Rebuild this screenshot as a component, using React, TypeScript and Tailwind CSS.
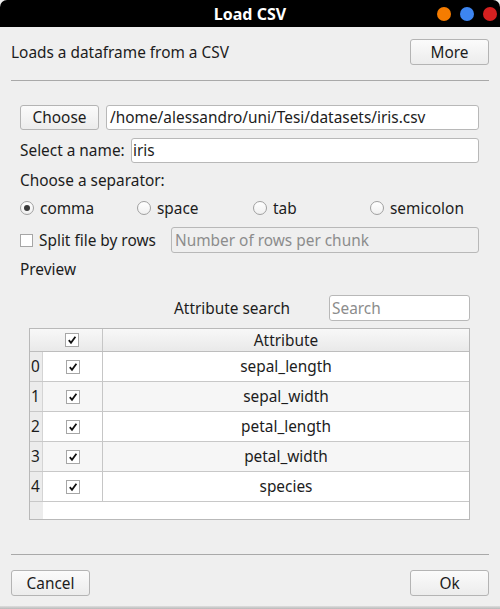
import React from "react";

const font = { fontFamily: '"Noto Sans", "DejaVu Sans", sans-serif' };

function Button({ label }: { label: string }) {
  return (
    <button className="w-[79px] h-[26px] shrink-0 rounded-[3px] border border-[#b4b4b4] bg-gradient-to-b from-[#fbfbfb] to-[#ececec] text-[15.4px] text-[#1c1c1c] leading-none pt-px">
      {label}
    </button>
  );
}

function Check() {
  return (
    <span className="w-[14px] h-[14px] bg-white border border-[#a6a6a6] flex items-center justify-center">
      <svg width="10" height="10" viewBox="0 0 10 10">
        <path d="M1.8 5.2 L4 7.8 L8.4 1.8" fill="none" stroke="#111" strokeWidth="1.8" />
      </svg>
    </span>
  );
}

function Radio({ label, checked }: { label: string; checked?: boolean }) {
  return (
    <div className="flex items-center gap-[6px]">
      <span className="w-[14px] h-[14px] rounded-full border border-[#a0a0a0] bg-gradient-to-b from-white to-[#f0f0f0] flex items-center justify-center">
        {checked && <span className="w-[6px] h-[6px] rounded-full bg-[#3a3a3a]" />}
      </span>
      <span className="pt-px">{label}</span>
    </div>
  );
}

const rows = ["sepal_length", "sepal_width", "petal_length", "petal_width", "species"];

export default function App() {
  return (
    <div className="w-[500px] h-[609px] bg-[#efefef] flex flex-col text-[15.4px] text-[#1c1c1c] overflow-hidden" style={font}>
      {/* title bar */}
      <div className="relative h-[27px] bg-black rounded-t-[7px] flex items-center justify-center shrink-0">
        <span className="text-white font-bold text-[16px]">Load CSV</span>
        <div className="absolute right-[3px] top-[7px] flex gap-[9px]">
          <span className="w-[14px] h-[14px] rounded-full bg-[#f57c00]" />
          <span className="w-[14px] h-[14px] rounded-full bg-[#3d85f0]" />
          <span className="w-[14px] h-[14px] rounded-full bg-[#d42020]" />
        </div>
      </div>

      <div className="px-[11px] flex flex-col flex-1">
        <div className="mt-[12px] h-[26px] flex items-center justify-between">
          <span className="pt-px">Loads a dataframe from a CSV</span>
          <Button label="More" />
        </div>
        <div className="mt-[15px] h-px bg-[#a9a9a9]" />

        <div className="pl-[9px] pr-[10px] mt-[24px] flex flex-col">
          <div className="h-[25px] flex gap-[7px]">
            <button className="w-[79px] h-[25px] shrink-0 rounded-[3px] border border-[#b4b4b4] bg-gradient-to-b from-[#fbfbfb] to-[#ececec] leading-none pt-px">
              Choose
            </button>
            <div className="flex-1 bg-white border border-[#b8b8b8] rounded-[3px] px-[3px] pt-px flex items-center">
              /home/alessandro/uni/Tesi/datasets/iris.csv
            </div>
          </div>

          <div className="mt-[8px] h-[25px] flex items-center">
            <span className="w-[111px] shrink-0 pt-px">Select a name:</span>
            <div className="flex-1 h-full bg-white border border-[#b8b8b8] rounded-[3px] px-[1px] pt-px flex items-center">
              iris
            </div>
          </div>

          <div className="mt-[4px] h-[26px] pt-px flex items-center">Choose a separator:</div>

          <div className="h-[30px] grid grid-cols-[117px_116px_117px_1fr] items-center">
            <Radio label="comma" checked />
            <Radio label="space" />
            <Radio label="tab" />
            <Radio label="semicolon" />
          </div>

          <div className="mt-[4px] h-[26px] flex items-center">
            <span className="w-[13px] h-[13px] bg-white border border-[#a6a6a6] shrink-0" />
            <span className="ml-[6px] w-[132px] shrink-0 pt-px">Split file by rows</span>
            <div className="flex-1 h-full border border-[#b8b8b8] rounded-[3px] px-[3px] pt-px flex items-center text-[#8c8c8c]">
              Number of rows per chunk
            </div>
          </div>

          <div className="h-[33px] pt-px flex items-center">Preview</div>

          <div className="mt-[9px] h-[26px] flex items-center pl-[154px] pr-[9px]">
            <span className="pt-px">Attribute search</span>
            <div className="ml-auto w-[141px] h-full bg-white border border-[#b8b8b8] rounded-[3px] px-[2px] pt-px flex items-center text-[#8c8c8c]">
              Search
            </div>
          </div>

          {/* table */}
          <div className="mt-[7px] mx-[9px] h-[192px] border border-[#b9b9b9] bg-white flex flex-col">
            <div className="h-[23px] flex bg-gradient-to-b from-[#f8f8f8] to-[#e9e9e9] border-b border-[#bdbdbd] shrink-0">
              <div className="w-[73px] flex items-center justify-end pr-[23px] border-r border-[#c6c6c6]">
                <Check />
              </div>
              <div className="flex-1 flex items-center justify-center pt-px">Attribute</div>
            </div>
            {rows.map((name, i) => (
              <div key={name} className={`h-[30px] flex shrink-0 border-b border-[#c8c8c8] ${i % 2 ? "bg-[#f6f6f6]" : "bg-white"}`}>
                <div className="w-[13px] bg-[#ececec] border-r border-[#d4d4d4] pl-[1px] pt-px flex items-center">{i}</div>
                <div className="w-[60px] flex items-center justify-center border-r border-[#c6c6c6]">
                  <Check />
                </div>
                <div className="flex-1 flex items-center justify-center pt-px">{name}</div>
              </div>
            ))}
            <div className="flex-1 flex">
              <div className="w-[13px] bg-[#ececec]" />
              <div className="flex-1" />
            </div>
          </div>
        </div>

        <div className="mt-[34px] h-px bg-[#a9a9a9]" />
        <div className="mt-[15px] h-[26px] flex items-center justify-between">
          <Button label="Cancel" />
          <Button label="Ok" />
        </div>
      </div>
      <div className="h-[3px] bg-gradient-to-b from-[#dedede] to-[#b8b8b8]" />
    </div>
  );
}
